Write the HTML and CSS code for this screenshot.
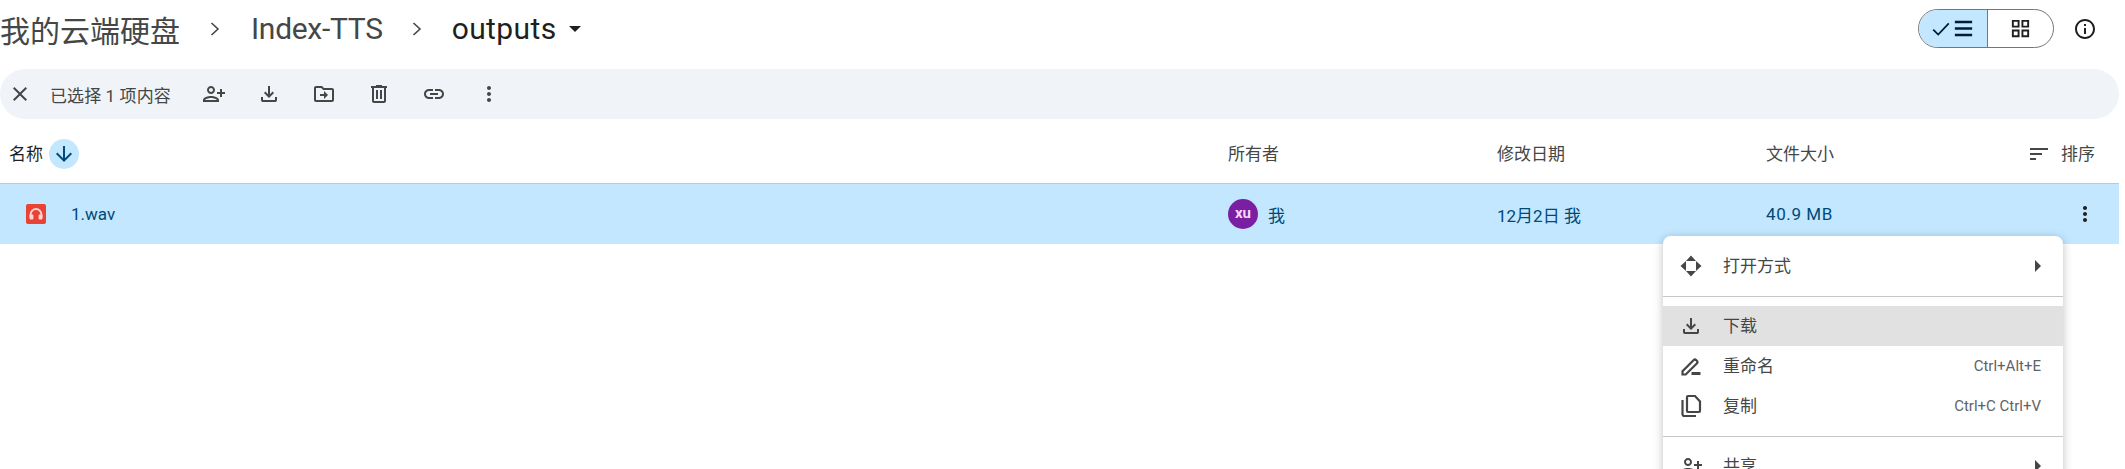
FILE: index.html
```html
<!DOCTYPE html>
<html lang="zh-CN">
<head>
  <meta charset="UTF-8" />
  <title>outputs - Google Drive</title>
  <link rel="stylesheet" href="styles.css">
</head>
<body>

  <div class="topbar">
    <div class="crumbs">
      <span class="crumb">我的云端硬盘</span>
      <svg class="chevron" viewBox="0 0 10 16"><path d="M1.5 2l6.500 6-6.500 6"/></svg>
      <span class="crumb folder">Index-TTS</span>
      <svg class="chevron" viewBox="0 0 10 16"><path d="M1.5 2l6.500 6-6.500 6"/></svg>
      <span class="crumb current">outputs</span>
      <span class="caret"></span>
    </div>
    <div class="view-tools">
      <div class="toggle">
        <div class="toggle-part on">
          <svg class="tick" viewBox="0 0 18 18"><path d="M2 9.500l4.500 4.500L16 4"/></svg>
          <svg class="icon" viewBox="0 0 24 24"><path d="M3 20h18v-2.600H3zM3 13.300h18v-2.600H3zM3 4v2.600h18V4z"/></svg>
        </div>
        <div class="toggle-part">
          <svg class="icon" viewBox="0 0 24 24"><path d="M3 3h8v8H3zm2 2v4h4V5zM13 3h8v8h-8zm2 2v4h4V5zM3 13h8v8H3zm2 2v4h4v-4zM13 13h8v8h-8zm2 2v4h4v-4z" fill-rule="evenodd"/></svg>
        </div>
      </div>
      <svg class="icon info" viewBox="0 0 24 24"><path d="M11 7h2v2h-2zm0 4h2v6h-2zm1-9C6.480 2 2 6.480 2 12s4.480 10 10 10 10-4.480 10-10S17.520 2 12 2zm0 18c-4.410 0-8-3.590-8-8s3.590-8 8-8 8 3.590 8 8-3.590 8-8 8z"/></svg>
    </div>
  </div>

  <div class="selection-bar">
    <svg class="icon" viewBox="0 0 24 24"><path d="M6.400 19 5 17.600 10.600 12 5 6.400 6.400 5 12 10.600 17.600 5 19 6.400 13.400 12 19 17.600 17.600 19 12 13.400z"/></svg>
    <span class="selected-count">已选择 1 项内容</span>
    <div class="actions">
      <svg class="icon" viewBox="0 0 24 24"><path transform="matrix(-1 0 0 1 24 0)" d="M15 12c2.210 0 4-1.790 4-4s-1.790-4-4-4-4 1.790-4 4 1.790 4 4 4zm0-6c1.100 0 2 .9 2 2s-.9 2-2 2-2-.9-2-2 .9-2 2-2zm0 8c-2.670 0-8 1.340-8 4v2h16v-2c0-2.660-5.330-4-8-4zm-6 4c.22-.72 3.310-2 6-2 2.700 0 5.800 1.290 6 2H9zm-3-3v-3h3v-2H6V7H4v3H1v2h3v3h2z"/></svg>
      <svg class="icon" viewBox="0 0 24 24"><path d="M12 16l-5-5 1.400-1.450L11 12.150V4h2v8.150l2.600-2.600L17 11l-5 5zM6 20c-.55 0-1.020-.2-1.410-.59C4.200 19.020 4 18.550 4 18v-3h2v3h12v-3h2v3c0 .55-.2 1.020-.59 1.410-.39.39-.86.59-1.410.59H6z"/></svg>
      <svg class="icon" viewBox="0 0 24 24"><path d="M20 6h-8l-2-2H4c-1.100 0-1.990.9-1.990 2L2 18c0 1.100.9 2 2 2h16c1.100 0 2-.9 2-2V8c0-1.100-.9-2-2-2zm0 12H4V6h5.170l2 2H20v10zm-8-4H8v-2h4V9l4 4-4 4v-3z"/></svg>
      <svg class="icon" viewBox="0 0 24 24"><path d="M15 4V3H9v1H4v2h1v13c0 1.100.9 2 2 2h10c1.100 0 2-.9 2-2V6h1V4h-5zm2 15H7V6h10v13zM9 8h2v9H9zm4 0h2v9h-2z"/></svg>
      <svg class="icon" viewBox="0 0 24 24"><path d="M17 7h-4v2h4c1.650 0 3 1.350 3 3s-1.350 3-3 3h-4v2h4c2.760 0 5-2.240 5-5s-2.240-5-5-5zm-6 8H7c-1.650 0-3-1.350-3-3s1.350-3 3-3h4V7H7c-2.760 0-5 2.240-5 5s2.240 5 5 5h4v-2zm-3-4h8v2H8z"/></svg>
      <svg class="icon" viewBox="0 0 24 24"><path d="M12 8c1.100 0 2-.9 2-2s-.9-2-2-2-2 .9-2 2 .9 2 2 2zm0 2c-1.100 0-2 .9-2 2s.9 2 2 2 2-.9 2-2-.9-2-2-2zm0 6c-1.100 0-2 .9-2 2s.9 2 2 2 2-.9 2-2-.9-2-2-2z"/></svg>
    </div>
  </div>

  <div class="file-list">
    <div class="list-head">
      <div class="name-head">
        <span class="head-label">名称</span>
        <span class="sort-dir">
          <svg class="icon" viewBox="0 0 24 24"><path d="M20 12l-1.410-1.410L13 16.170V4h-2v12.170l-5.580-5.590L4 12l8 8 8-8z"/></svg>
        </span>
      </div>
      <div class="head-label">所有者</div>
      <div class="head-label">修改日期</div>
      <div class="size-head">
        <span class="head-label">文件大小</span>
        <span class="sort-btn">
          <svg class="icon" viewBox="0 0 24 24"><path d="M3 18h6v-2H3zM3 6v2h18V6zm0 7h12v-2H3z"/></svg>
          <span class="head-label">排序</span>
        </span>
      </div>
    </div>

    <div class="list-row">
      <div class="file-name">
        <svg class="file-icon" viewBox="0 0 20 20">
          <rect width="20" height="20" rx="2" fill="#ea4335"/>
          <path d="M4.600 14v-3.600a5.400 5.400 0 0 1 10.800 0V14" fill="none" stroke="#fbd5d1" stroke-width="2"/>
          <rect x="3.600" y="10.600" width="3.800" height="5" rx="1" fill="#fbd5d1"/>
          <rect x="12.600" y="10.600" width="3.800" height="5" rx="1" fill="#fbd5d1"/>
        </svg>
        <span>1.wav</span>
      </div>
      <div class="owner">
        <span class="avatar">xu</span>
        <span>我</span>
      </div>
      <div>12月2日 我</div>
      <div class="size-cell">
        <span class="size-text">40.9 MB</span>
        <svg class="icon" viewBox="0 0 24 24"><path d="M12 8c1.100 0 2-.9 2-2s-.9-2-2-2-2 .9-2 2 .9 2 2 2zm0 2c-1.100 0-2 .9-2 2s.9 2 2 2 2-.9 2-2-.9-2-2-2zm0 6c-1.100 0-2 .9-2 2s.9 2 2 2 2-.9 2-2-.9-2-2-2z"/></svg>
      </div>
    </div>
  </div>

  <div class="context-menu">
    <div class="menu-item">
      <svg class="icon" viewBox="0 0 24 24"><path d="M12 1.500 17 7H7zM12 22.500 7 17h10zM1.500 12 7 7v10zM22.500 12 17 17V7z"/></svg>
      <span class="label">打开方式</span>
      <span class="submenu"></span>
    </div>
    <div class="menu-sep"></div>
    <div class="menu-item hover">
      <svg class="icon" viewBox="0 0 24 24"><path d="M12 16l-5-5 1.400-1.450L11 12.150V4h2v8.150l2.600-2.600L17 11l-5 5zM6 20c-.55 0-1.020-.2-1.410-.59C4.200 19.020 4 18.550 4 18v-3h2v3h12v-3h2v3c0 .55-.2 1.020-.59 1.410-.39.39-.86.59-1.410.59H6z"/></svg>
      <span class="label">下载</span>
    </div>
    <div class="menu-item">
      <svg class="icon" viewBox="0 0 24 24">
        <path class="pen" d="M3.500 20.500v-3.200L14.500 6.200a2 2 0 0 1 2.800 0l.5.5a2 2 0 0 1 0 2.800L6.700 20.500z"/>
        <path d="M12.500 18h9v3h-9z"/>
      </svg>
      <span class="label">重命名</span>
      <span class="shortcut">Ctrl+Alt+E</span>
    </div>
    <div class="menu-item">
      <svg class="icon" viewBox="0 0 24 24">
        <path class="pen" d="M9 2h7l5 5.500V17a1 1 0 0 1-1 1H9a1 1 0 0 1-1-1V3a1 1 0 0 1 1-1z"/>
        <path class="pen" d="M3.500 6v14a2 2 0 0 0 2 2H17"/>
      </svg>
      <span class="label">复制</span>
      <span class="shortcut">Ctrl+C Ctrl+V</span>
    </div>
    <div class="menu-sep"></div>
    <div class="menu-item">
      <svg class="icon" viewBox="0 0 24 24"><path transform="matrix(-1 0 0 1 24 0)" d="M15 12c2.210 0 4-1.790 4-4s-1.790-4-4-4-4 1.790-4 4 1.790 4 4 4zm0-6c1.100 0 2 .9 2 2s-.9 2-2 2-2-.9-2-2 .9-2 2-2zm0 8c-2.670 0-8 1.340-8 4v2h16v-2c0-2.660-5.330-4-8-4zm-6 4c.22-.72 3.310-2 6-2 2.700 0 5.800 1.290 6 2H9zm-3-3v-3h3v-2H6V7H4v3H1v2h3v3h2z"/></svg>
      <span class="label">共享</span>
      <span class="submenu"></span>
    </div>
  </div>

</body>
</html>
```

FILE: styles.css
```css
* {
  margin: 0;
  padding: 0;
  box-sizing: border-box;
}

html, body {
  height: 469px;
  overflow: hidden;
}

body {
  position: relative;
  background: white;
  color: #444746;
  font-family: 'Roboto', 'Noto Sans CJK SC', sans-serif;
  font-size: 17px;
}

.icon {
  display: block;
  flex: none;
  width: 24px;
  height: 24px;
  fill: currentColor;
}

/* top row */
.topbar {
  display: flex;
  justify-content: space-between;
  align-items: center;
  height: 57px;
  margin-bottom: 12px;
  padding-right: 28px;
}

.crumbs {
  display: flex;
  align-items: center;
}

.crumb {
  font-size: 30px;
  color: #444746;
}

.crumb.folder {
  letter-spacing: -0.3px;
}

.crumb.current {
  color: #1f1f1f;
  letter-spacing: 0.4px;
}

.chevron {
  width: 10px;
  height: 16px;
  margin: 0 31px 0 30px;
  fill: none;
  stroke: #444746;
  stroke-width: 1.6;
}

.crumb.folder + .chevron {
  margin-left: 29px;
  margin-right: 30px;
}

.caret {
  width: 0;
  height: 0;
  margin-left: 12px;
  border-left: 6px solid transparent;
  border-right: 6px solid transparent;
  border-top: 6px solid #1f1f1f;
}

.view-tools {
  display: flex;
  align-items: center;
  gap: 19px;
}

.toggle {
  display: flex;
  width: 136px;
  height: 39px;
  border: 1px solid #747775;
  border-radius: 20px;
  overflow: hidden;
  color: #1f1f1f;
}

.toggle-part {
  flex: 1;
  display: flex;
  justify-content: center;
  align-items: center;
}

.toggle-part.on {
  flex: none;
  width: 69px;
  gap: 1px;
  background: #c2e7ff;
  border-right: 1px solid #747775;
  color: #001d35;
}

.toggle-part .icon {
  width: 23px;
  height: 23px;
}

.tick {
  width: 20px;
  height: 20px;
  fill: none;
  stroke: #001d35;
  stroke-width: 1.6;
}

.info {
  color: #1f1f1f;
}

/* selection toolbar */
.selection-bar {
  display: flex;
  align-items: center;
  width: 2119px;
  height: 50px;
  padding-left: 8px;
  background: #f0f4f9;
  border-radius: 25px;
}

.selected-count {
  margin: 0 31px 0 18px;
  letter-spacing: 0.1px;
}

.actions {
  display: flex;
  gap: 31px;
}

/* file table */
.file-list {
  width: 2119px;
}

.list-head, .list-row {
  display: grid;
  grid-template-columns: 1219px 269px 269px 1fr;
  align-items: center;
  padding-left: 9px;
}

.list-head {
  height: 65px;
  padding-top: 6px;
  border-bottom: 1px solid #c7c7c7;
}

/* the CJK glyphs sit low in the Roboto line box */
.head-label {
  padding-bottom: 3px;
}

.name-head {
  display: flex;
  align-items: center;
  gap: 6px;
  color: #1f1f1f;
}

.sort-dir {
  display: flex;
  justify-content: center;
  align-items: center;
  width: 30px;
  height: 30px;
  background: #c2e7ff;
  border-radius: 50%;
  color: #004a77;
}

.size-head {
  display: flex;
  justify-content: space-between;
  align-items: center;
  padding-right: 24px;
}

.sort-btn {
  display: flex;
  align-items: center;
  gap: 10px;
}

.list-row {
  height: 60px;
  background: #c2e7ff;
  color: #004a77;
}

.file-name {
  display: flex;
  align-items: center;
  gap: 25px;
  padding-left: 17px;
}

.file-icon {
  display: block;
  width: 20px;
  height: 20px;
}

.owner {
  display: flex;
  align-items: center;
  gap: 10px;
}

.avatar {
  display: flex;
  justify-content: center;
  align-items: center;
  width: 30px;
  height: 30px;
  padding-bottom: 2px;
  background: #7b1fa2;
  border-radius: 50%;
  color: #f3dcf7;
  font-size: 15px;
  font-weight: 700;
}

.size-text {
  letter-spacing: 0.6px;
}

.size-cell {
  display: flex;
  justify-content: space-between;
  align-items: center;
  padding-right: 22px;
}

.size-cell .icon {
  color: #1f1f1f;
}

/* context menu, floats over the list */
.context-menu {
  position: absolute;
  top: 236px;
  left: 1663px;
  width: 400px;
  padding-top: 10px;
  background: white;
  border-radius: 8px 8px 0 0;
  box-shadow: 0 2px 10px rgba(0, 0, 0, 0.25);
}

.menu-item {
  display: flex;
  align-items: center;
  height: 40px;
  padding: 0 22px 0 16px;
}

.menu-item.hover {
  background: #e1e1e1;
}

.menu-item .icon {
  width: 24px;
  height: 24px;
  margin-right: 20px;
  color: #444746;
}

.pen {
  fill: none;
  stroke: currentColor;
  stroke-width: 2.2;
}

.label {
  flex: 1;
  padding-bottom: 3px;
}

.shortcut {
  font-size: 15px;
  color: #5f6368;
}

.submenu {
  width: 0;
  height: 0;
  border-top: 6px solid transparent;
  border-bottom: 6px solid transparent;
  border-left: 6px solid #444746;
}

.menu-sep {
  height: 1px;
  margin: 10px 0 9px;
  background: #c7c7c7;
}
```
